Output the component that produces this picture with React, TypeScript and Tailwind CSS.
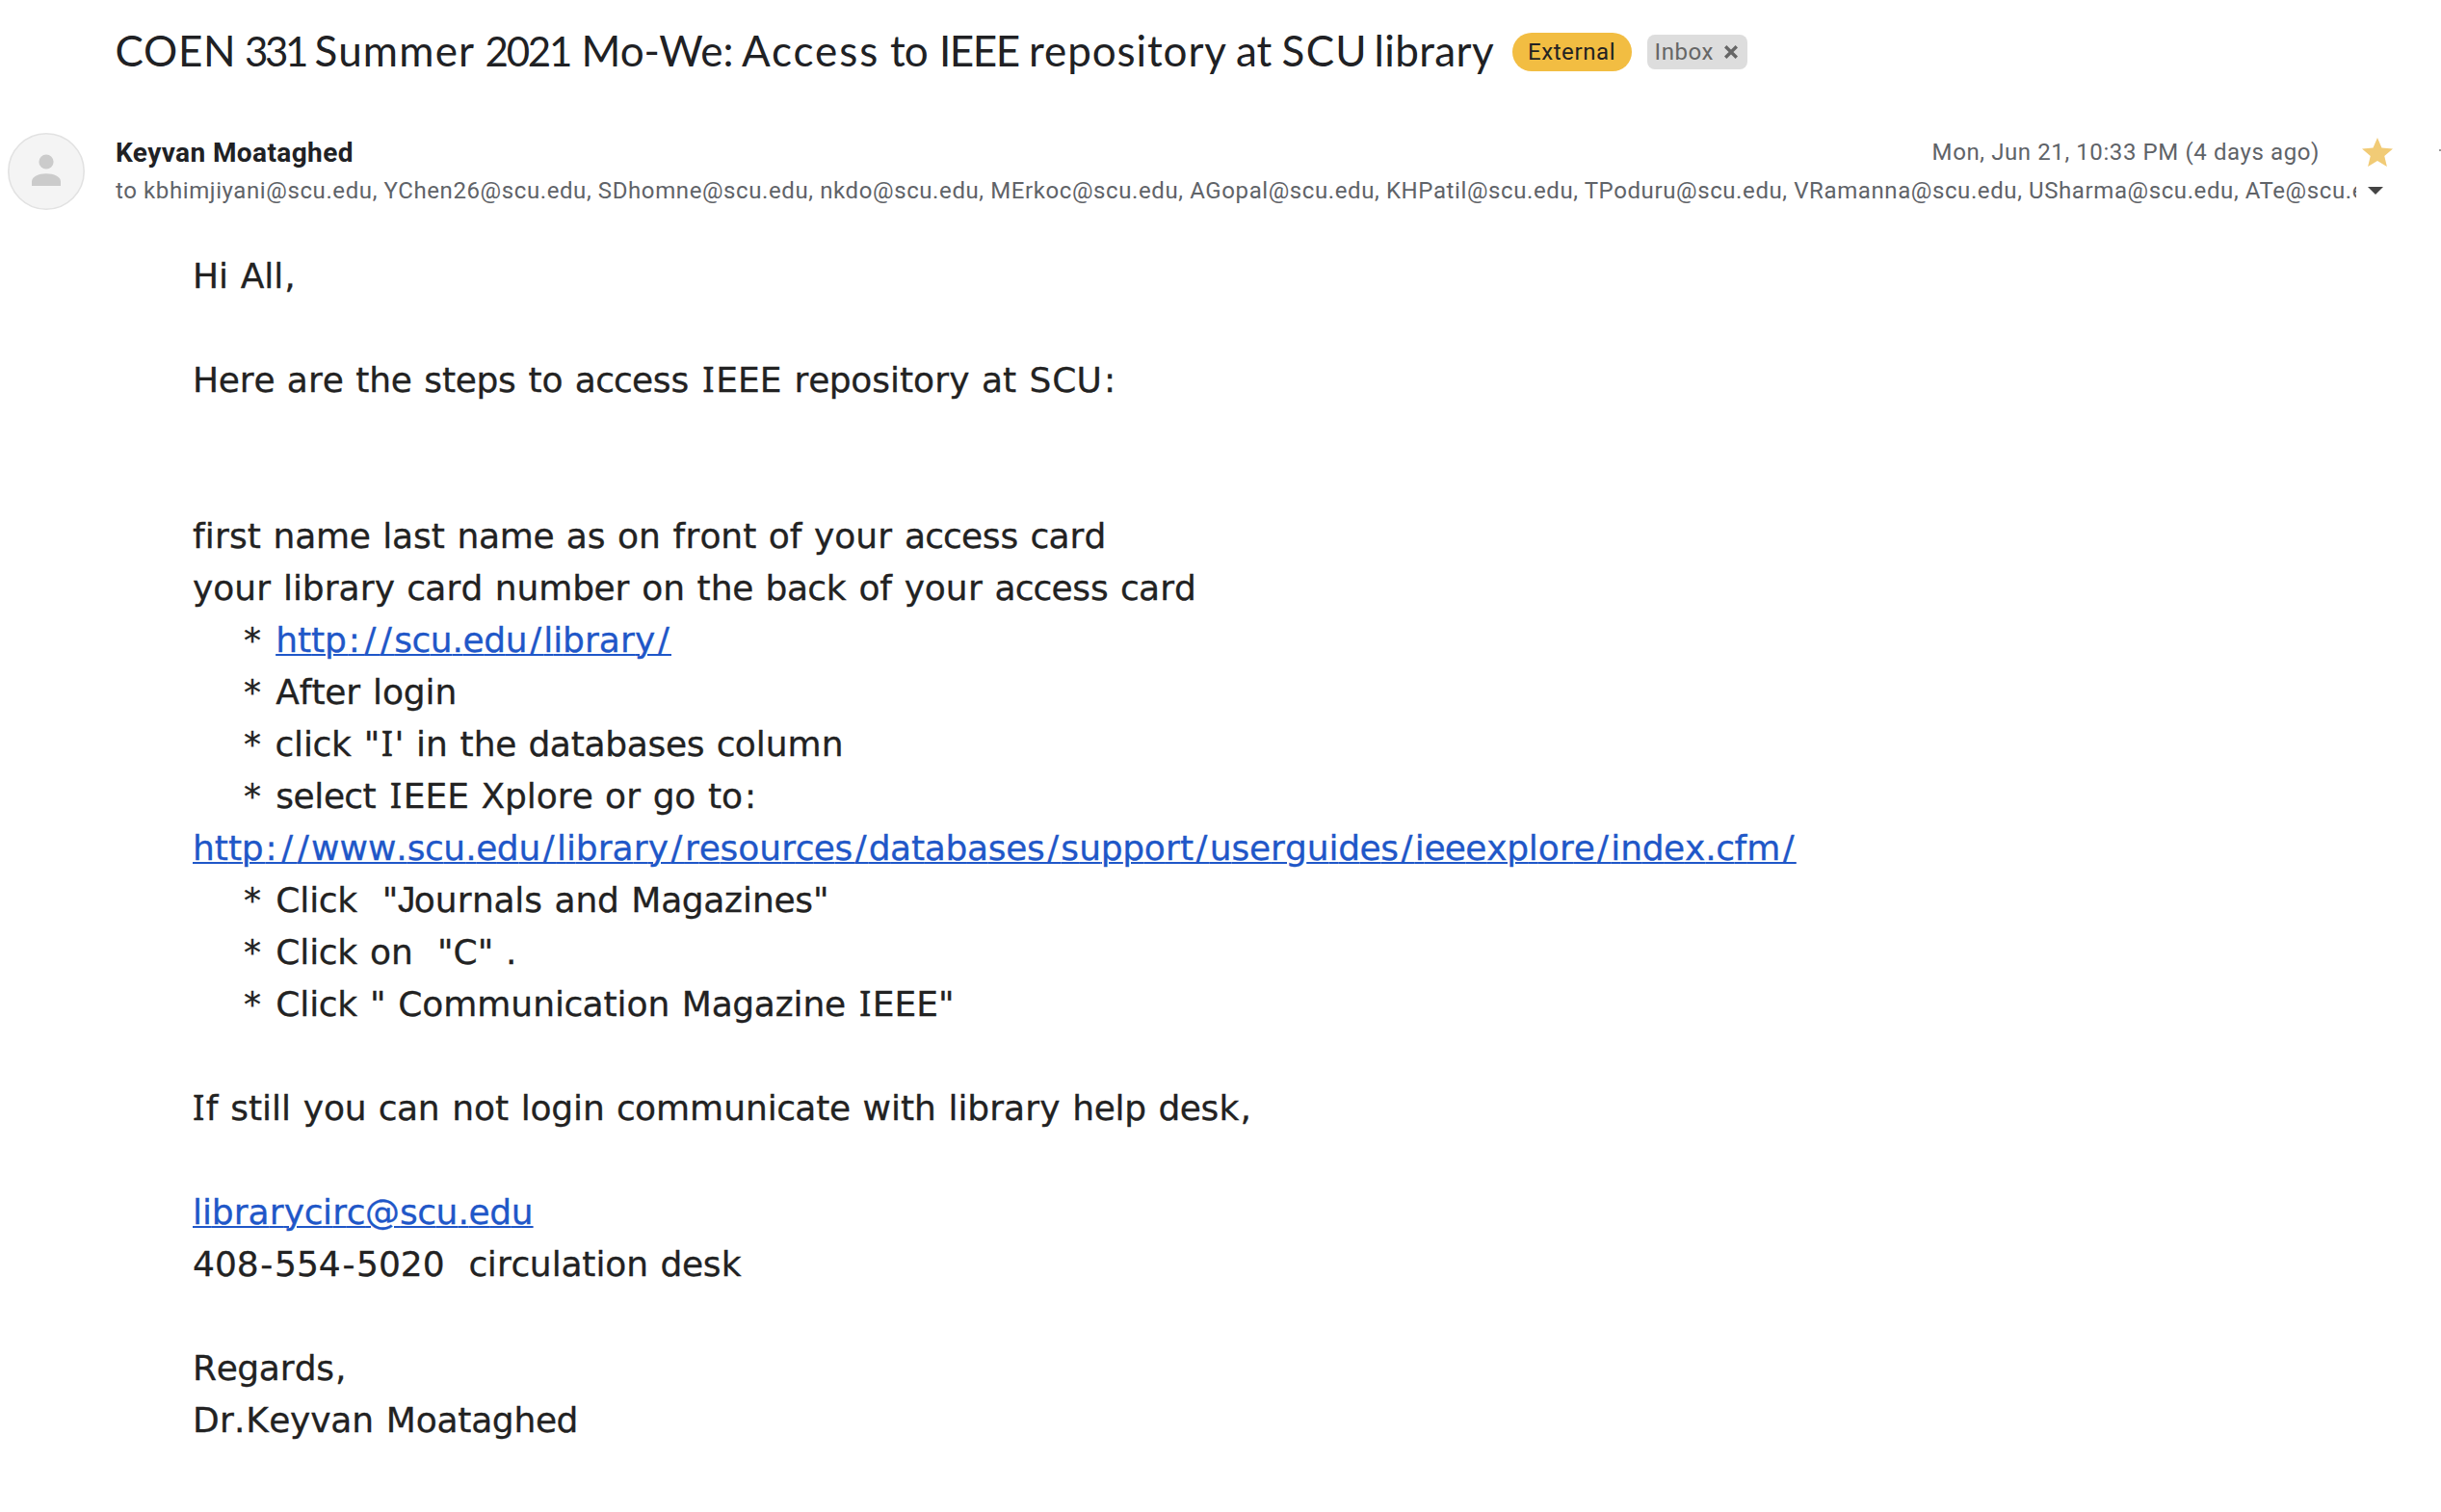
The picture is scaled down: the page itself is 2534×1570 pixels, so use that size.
type Run = { text: string; spacing: number; glyph?: "I" | "J" };

// Extra advance, in pixels, that certain glyphs get in the message body.
const EXTRA: Record<string, number> = {
  "/": 4.45, ":": 4.2, I: 2.95, J: -3.2, S: 1.75, K: 1.3, ",": 1.6, "-": 3.3, "*": 4.9,
  a: -0.43, b: -0.43, c: -1.04, d: -0.43, e: -0.68, g: -0.43, j: 2.4, k: 0.47, o: -0.18, p: -0.43, r: 0.58,
};

function toRuns(text: string): Run[] {
  const runs: Run[] = [];
  const chars = [...text];
  const half = (c?: string) => (c && c !== "J" ? (EXTRA[c] ?? 0) / 2 : 0);
  chars.forEach((c, i) => {
    const spacing = (c === "J" ? EXTRA.J : half(c)) + half(chars[i + 1]);
    const glyph = c === "I" || c === "J" ? c : undefined;
    const last = runs[runs.length - 1];
    if (last && last.glyph === glyph && Math.abs(last.spacing - spacing) < 0.001) last.text += c;
    else runs.push({ text: c, spacing, glyph });
  });
  return runs;
}

const GLYPH_FONT = {
  I: "font-['Noto_Sans',sans-serif] text-[36.5px] leading-none",
  J: "-ml-[3px] font-['Liberation_Mono',monospace] text-[38px] leading-none",
};

function Spaced({ text }: { text: string }) {
  return (
    <>
      {toRuns(text).map((r, i) => (
        <span key={i} className={r.glyph && GLYPH_FONT[r.glyph]} style={{ letterSpacing: `${r.spacing}px` }}>
          {r.text}
        </span>
      ))}
    </>
  );
}

function Line({ text = "", link }: { text?: string; link?: string }) {
  return (
    <div className="h-[54px]">
      <Spaced text={text} />
      {link && (
        <a className="text-[#1f57c8] underline decoration-2 underline-offset-[2px]">
          <Spaced text={link} />
        </a>
      )}
    </div>
  );
}

const BODY: { text?: string; link?: string }[] = [
  { text: "Hi All," },
  {},
  { text: "Here are the steps to access IEEE repository at SCU:" },
  {},
  {},
  { text: "first name last name as on front of your access card" },
  { text: "your library card number on the back of your access card" },
  { text: "    * ", link: "http://scu.edu/library/" },
  { text: "    * After login" },
  { text: "    * click \"I' in the databases column" },
  { text: "    * select IEEE Xplore or go to:" },
  { link: "http://www.scu.edu/library/resources/databases/support/userguides/ieeexplore/index.cfm/" },
  { text: "    * Click  \"Journals and Magazines\"" },
  { text: "    * Click on  \"C\" ." },
  { text: "    * Click \" Communication Magazine IEEE\"" },
  {},
  { text: "If still you can not login communicate with library help desk," },
  {},
  { link: "librarycirc@scu.edu" },
  { text: "408-554-5020  circulation desk" },
  {},
  { text: "Regards," },
  { text: "Dr.Keyvan Moataghed" },
];

const TO =
  "to kbhimjiyani@scu.edu, YChen26@scu.edu, SDhomne@scu.edu, nkdo@scu.edu, MErkoc@scu.edu, AGopal@scu.edu, KHPatil@scu.edu, TPoduru@scu.edu, VRamanna@scu.edu, USharma@scu.edu, ATe@scu.edu";

function Subject() {
  return (
    <h1 className="flex h-[60px] items-baseline whitespace-pre font-['Lato',sans-serif] text-[44px] leading-[62px] text-[#202124]">
      <span className="w-[134.5px] tracking-[0.7px]">COEN </span>
      <span className="w-[72.5px] text-[42px] tracking-[-3.4px]">331 </span>
      <span className="w-[177px] tracking-[1.2px]">Summer </span>
      <span className="w-[100px] text-[42px] tracking-[-2.2px]">2021 </span>
      <span className="w-[166.5px]">Mo-We: </span>
      <span className="w-[154px] tracking-[1.9px]">Access </span>
      <span className="w-[51px] tracking-[-0.8px]">to </span>
      <span className="w-[93px] tracking-[-1.5px]">IEEE </span>
      <span className="w-[215px] tracking-[0.9px]">repository </span>
      <span className="w-[47.5px]">at </span>
      <span className="w-[96px] tracking-[1.3px]">SCU </span>
      <span className="w-[143px] tracking-[0.4px]">library</span>
    </h1>
  );
}

export default function App() {
  return (
    <main className="h-[1570px] w-[2534px] overflow-hidden bg-white font-['Roboto',sans-serif]">
      <header className="flex h-[138px] items-start pt-[21px] pl-[119.5px]">
        <Subject />
        <span className="mt-[13px] flex h-10 w-[124px] items-center justify-center rounded-full bg-[#f2bd42] text-2xl tracking-[0.6px] text-[#222]">
          External
        </span>
        <span className="mt-[15px] ml-4 flex h-9 w-[104px] items-center rounded-lg bg-[#ddd] pl-2 text-2xl tracking-[0.6px] text-[#666]">
          Inbox
          <svg className="ml-[10.500px] size-[14px]" viewBox="0 0 14 14" stroke="#666" strokeWidth="3.4">
            <path d="M1.2 1.2 12.8 12.8M12.8 1.2 1.2 12.8" />
          </svg>
        </span>
      </header>

      <section className="flex h-[122px] pl-2">
        <svg className="size-20 shrink-0" viewBox="0 0 80 80">
          <circle cx="40" cy="40" r="39.2" fill="#f4f4f4" stroke="#e2e2e2" strokeWidth="1.6" />
          <circle cx="40" cy="30" r="7.6" fill="#cbcbcb" />
          <path d="M25 55v-4.500C25 45.500 32 42.300 40 42.300s15 3.200 15 8.200V55z" fill="#cbcbcb" />
        </svg>
        <div className="ml-8 w-[2414px]">
          <div className="flex h-10 items-start">
            <span className="text-[28px] leading-[42px] font-bold tracking-[0.4px] text-[#202124]">Keyvan Moataghed</span>
            <span className="ml-auto text-2xl leading-10 tracking-[0.6px] text-[#5f6368]">Mon, Jun 21, 10:33 PM (4 days ago)</span>
            <svg className="mt-[5px] mr-12 ml-11 h-[30px] w-8" viewBox="2 2 20 19" preserveAspectRatio="none" fill="#f1cb76">
              <path d="M12 17.270 18.180 21l-1.640-7.030L22 9.240l-7.190-.61L12 2 9.190 8.630 2 9.240l5.460 4.730L5.820 21z" />
            </svg>
            <span className="mt-[17px] h-[2px] w-[2px] bg-[#9a9a9a]" />
          </div>
          <div className="flex h-10 items-center">
            <p className="w-[2326px] overflow-hidden text-2xl leading-10 tracking-[0.6px] whitespace-nowrap text-[#5f6368]">{TO}</p>
            <svg className="ml-3 h-2 w-4" viewBox="0 0 16 8" fill="#444">
              <path d="M0 0h16L8 8z" />
            </svg>
          </div>
        </div>
      </section>

      <article className="pl-[200px] font-['DejaVu_Sans',sans-serif] text-[36px] leading-[54px] whitespace-pre text-[#222] [font-kerning:none] [font-variant-ligatures:none] [-webkit-text-stroke:0.3px] [word-spacing:1.2px]">
        {BODY.map((l, i) => (
          <Line key={i} {...l} />
        ))}
      </article>
    </main>
  );
}
